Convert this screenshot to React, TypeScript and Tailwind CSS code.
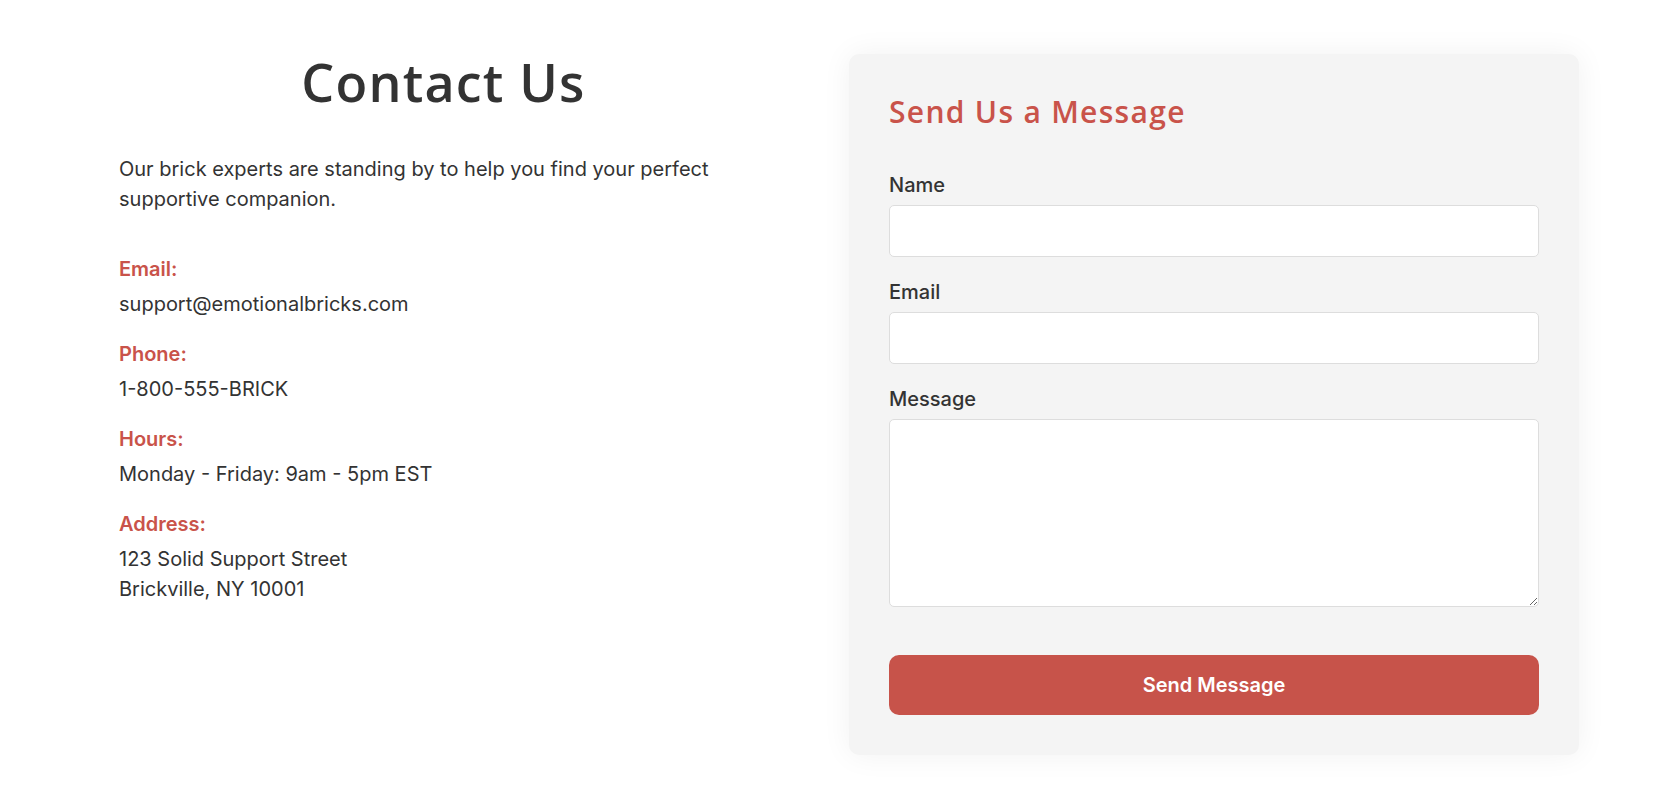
import React from "react";

const contactItems = [
  { label: "Email:", lines: ["support@emotionalbricks.com"] },
  { label: "Phone:", lines: ["1-800-555-BRICK"] },
  { label: "Hours:", lines: ["Monday - Friday: 9am - 5pm EST"] },
  { label: "Address:", lines: ["123 Solid Support Street", "Brickville, NY 10001"] },
];

const headingFont = "font-['Open_Sans',sans-serif]";

export default function App() {
  return (
    <div className="min-h-screen bg-white font-['Inter',sans-serif] text-[#333333]">
      <div className="flex gap-[81px] pl-[119px] pt-[54px]">
        {/* left: contact info */}
        <div className="w-[649px] shrink-0">
          <h1
            className={`${headingFont} text-center text-[52px] leading-[56px] font-semibold tracking-[1.2px] text-[#333333]`}
          >
            Contact Us
          </h1>
          <p className="mt-[44px] text-[20px] leading-[30px]">
            Our brick experts are standing by to help you find your perfect
            supportive companion.
          </p>
          <div className="mt-[40px] flex flex-col gap-5">
            {contactItems.map((item) => (
              <div key={item.label}>
                <div className="mb-[5px] text-[20px] leading-[30px] font-semibold text-[#c9534a]">
                  {item.label}
                </div>
                {item.lines.map((line) => (
                  <div key={line} className="text-[20px] leading-[30px]">
                    {line}
                  </div>
                ))}
              </div>
            ))}
          </div>
        </div>

        {/* right: form card */}
        <div className="w-[730px] shrink-0 rounded-[10px] bg-[#f4f4f4] p-10 shadow-[0_0_30px_rgba(0,0,0,0.06)]">
          <h2
            className={`${headingFont} mb-10 text-[30px] leading-[36px] font-semibold tracking-[1.3px] text-[#c9534a]`}
          >
            Send Us a Message
          </h2>
          <form onSubmit={(e) => e.preventDefault()}>
            <div className="mb-5">
              <label htmlFor="name" className="mb-[5px] block text-[20px] leading-[30px] font-medium">
                Name
              </label>
              <input
                id="name"
                type="text"
                className="block h-[52px] w-full rounded-[5px] border border-[#dddddd] bg-white px-4 text-[16px] outline-none"
              />
            </div>
            <div className="mb-5">
              <label htmlFor="email" className="mb-[5px] block text-[20px] leading-[30px] font-medium">
                Email
              </label>
              <input
                id="email"
                type="email"
                className="block h-[52px] w-full rounded-[5px] border border-[#dddddd] bg-white px-4 text-[16px] outline-none"
              />
            </div>
            <div>
              <label htmlFor="message" className="mb-[5px] block text-[20px] leading-[30px] font-medium">
                Message
              </label>
              <textarea
                id="message"
                className="block h-[188px] w-full resize-y rounded-[5px] border border-[#dddddd] bg-white px-4 py-3 text-[16px] outline-none"
              />
            </div>
            <button
              type="submit"
              className="mt-12 flex h-[60px] w-full items-center justify-center rounded-[10px] bg-[#c7534a] text-[20px] font-semibold text-white"
            >
              Send Message
            </button>
          </form>
        </div>
      </div>
    </div>
  );
}
